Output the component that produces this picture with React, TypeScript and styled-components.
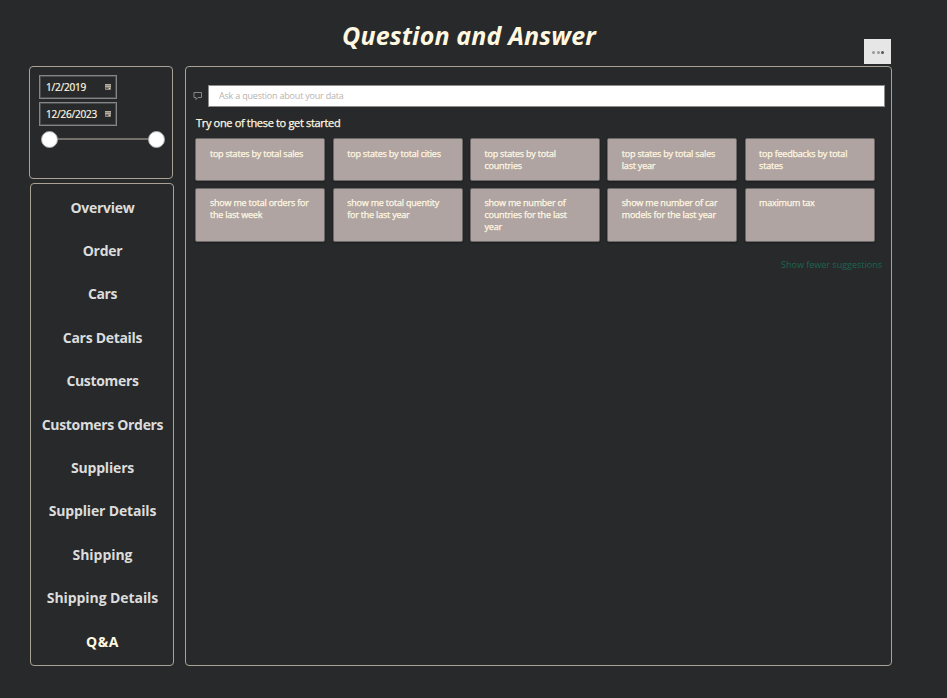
import React from "react";
import styled, { createGlobalStyle } from "styled-components";

const GlobalStyle = createGlobalStyle`
  * { box-sizing: border-box; }
  body {
    margin: 0;
    background: #27292b;
    font-family: "Open Sans", "Noto Sans", sans-serif;
  }
  button, input { font-family: inherit; }
`;

const Page = styled.div`
  width: 947px;
  height: 698px;
  overflow: hidden;
  background: #27292b;
`;

const Header = styled.header`
  display: grid;
  grid-template-columns: 864px 27px;
  height: 66px;
`;

const Title = styled.h1`
  margin: 18px 0 0 342px;
  font-size: 25px;
  line-height: 34px;
  font-weight: 700;
  font-style: italic;
  letter-spacing: 0.15px;
  white-space: nowrap;
  color: #fff8e1;
`;

const MoreButton = styled.button`
  display: flex;
  align-items: center;
  justify-content: center;
  gap: 1.5px;
  width: 27px;
  height: 25px;
  margin-top: 39px;
  padding: 1px 0 0 1px;
  border: 0;
  background: #e6e6e6;
`;

const Dot = styled.span<{ $dark?: boolean }>`
  width: 3px;
  height: 3px;
  border-radius: 50%;
  background: ${(p) => (p.$dark ? "#555" : "#999")};
`;

const Body = styled.div`
  display: grid;
  grid-template-columns: 145px 707px;
  column-gap: 11px;
  padding-left: 29px;
  height: 600px;
`;

const Sidebar = styled.aside`
  display: flex;
  flex-direction: column;
  gap: 4px;
`;

const Panel = styled.section`
  border: 1px solid #aaa296;
  border-radius: 4px;
`;

const Filter = styled(Panel)`
  display: flex;
  flex-direction: column;
  width: 144px;
  height: 113px;
  padding: 8px 0 0 9px;
`;

const DateField = styled.div`
  display: flex;
  align-items: center;
  justify-content: space-between;
  width: 78px;
  height: 24px;
  margin-bottom: 3px;
  padding: 0 4px 1px 6px;
  border: 1px solid #858585;
  outline: 1px solid #4c4d4e;
  outline-offset: -2px;
  color: #fff8e1;
  font-size: 10px;
  letter-spacing: -0.2px;
  -webkit-text-stroke: 0.2px currentColor;
  white-space: nowrap;
`;

const Slider = styled.div`
  display: flex;
  align-items: center;
  width: 124px;
  height: 18px;
  margin: 1px 0 0 2px;
`;

const Thumb = styled.span`
  width: 17px;
  height: 17px;
  flex: none;
  border: 1px solid #aaa;
  border-radius: 50%;
  background: #fff;
`;

const Track = styled.span`
  flex: 1;
  height: 2px;
  background: #74706c;
`;

const Nav = styled(Panel)`
  display: flex;
  flex-direction: column;
  align-items: center;
  width: 144px;
  height: 483px;
  margin-left: 1px;
  padding: 1.7px 0 0 1px;
`;

const NavItem = styled.a<{ $active?: boolean; $tracking: number }>`
  height: 43.4px;
  line-height: 43.4px;
  font-size: 14px;
  font-weight: 700;
  letter-spacing: ${(p) => p.$tracking}px;
  white-space: nowrap;
  color: ${(p) => (p.$active ? "#fff8e1" : "#dcdcdc")};
`;

const Main = styled(Panel)`
  display: flex;
  flex-direction: column;
  padding: 18px 6px 0 7px;
`;

const AskRow = styled.div`
  display: flex;
  align-items: center;
  gap: 5px;
  height: 22px;
`;

const AskInput = styled.input`
  width: 678px;
  height: 22px;
  padding: 0 0 2px 10px;
  border: 1px solid #8c8c8c;
  border-radius: 0;
  background: #fff;
  font-size: 9px;
  letter-spacing: -0.2px;
  &::placeholder { color: #b8b3b1; opacity: 1; }
`;

const Hint = styled.p`
  margin: 8px 0 7px 3px;
  font-size: 11px;
  line-height: 16px;
  letter-spacing: -0.33px;
  -webkit-text-stroke: 0.25px currentColor;
  color: #fff8e1;
`;

const Cards = styled.div`
  display: grid;
  grid-template-columns: repeat(5, 130px);
  grid-template-rows: 43px 54px;
  column-gap: 7.3px;
  row-gap: 7px;
  padding-left: 2.4px;
`;

const Card = styled.button`
  display: flex;
  align-items: flex-start;
  padding: 9px 10px 0 13.5px;
  border: 1px solid #6f6a6a;
  border-radius: 2px;
  background: #b0a4a3;
  box-shadow: 0 1px 2px rgba(0, 0, 0, 0.3);
  color: #fff8e1;
  font-size: 9px;
  letter-spacing: -0.21px;
  -webkit-text-stroke: 0.25px currentColor;
  line-height: 12px;
  text-align: left;
  white-space: pre-line;

  &:nth-child(n + 6) { padding-top: 8px; }
`;

const Fewer = styled.a`
  align-self: flex-end;
  margin: 15px 3px 0 0;
  font-size: 9px;
  line-height: 16px;
  color: #1d6650;
`;

const CalendarIcon = () => (
  <svg width="8" height="8" viewBox="0 0 8 8" fill="none">
    <rect x="1" y="1" width="6" height="6" rx="0.8" fill="#8f8980" />
    <path d="M1 1.5h6M1 3.5h6" stroke="#b5ada2" />
    <path d="M2 5.2h2" stroke="#45443f" />
    <path d="M5 5.5h1" stroke="#e0d8c8" />
  </svg>
);

const ChatIcon = () => (
  <svg width="10" height="10" viewBox="0 0 10 10" fill="none">
    <path d="M1 1.5h7.5v5h-3.5L3 8.5v-2H1z" stroke="#96918c" strokeWidth="0.9" />
  </svg>
);

const pages = [
  { label: "Overview", tracking: -0.25 },
  { label: "Order", tracking: -0.25 },
  { label: "Cars", tracking: -0.4 },
  { label: "Cars Details", tracking: -0.3 },
  { label: "Customers", tracking: -0.33 },
  { label: "Customers Orders", tracking: -0.33 },
  { label: "Suppliers", tracking: -0.17 },
  { label: "Supplier Details", tracking: -0.17 },
  { label: "Shipping", tracking: -0.05 },
  { label: "Shipping Details", tracking: -0.08 },
  { label: "Q&A", tracking: 0.5 },
];

const suggestions = [
  "top states by total sales",
  "top states by total cities",
  "top states by total\ncountries",
  "top states by total sales\nlast year",
  "top feedbacks by total\nstates",
  "show me total orders for\nthe last week",
  "show me total quentity\nfor the last year",
  "show me number of\ncountries for the last\nyear",
  "show me number of car\nmodels for the last year",
  "maximum tax",
];

export default function App() {
  return (
    <Page>
      <GlobalStyle />
      <Header>
        <Title>Question and Answer</Title>
        <MoreButton aria-label="More options">
          <Dot />
          <Dot />
          <Dot $dark />
        </MoreButton>
      </Header>
      <Body>
        <Sidebar>
          <Filter>
            <DateField>1/2/2019<CalendarIcon /></DateField>
            <DateField>12/26/2023<CalendarIcon /></DateField>
            <Slider>
              <Thumb />
              <Track />
              <Thumb />
            </Slider>
          </Filter>
          <Nav as="nav">
            {pages.map((p) => (
              <NavItem key={p.label} $tracking={p.tracking} $active={p.label === "Q&A"}>
                {p.label}
              </NavItem>
            ))}
          </Nav>
        </Sidebar>
        <Main as="main">
          <AskRow>
            <ChatIcon />
            <AskInput placeholder="Ask a question about your data" />
          </AskRow>
          <Hint>Try one of these to get started</Hint>
          <Cards>
            {suggestions.map((s) => (
              <Card key={s}>{s}</Card>
            ))}
          </Cards>
          <Fewer>Show fewer suggestions</Fewer>
        </Main>
      </Body>
    </Page>
  );
}
